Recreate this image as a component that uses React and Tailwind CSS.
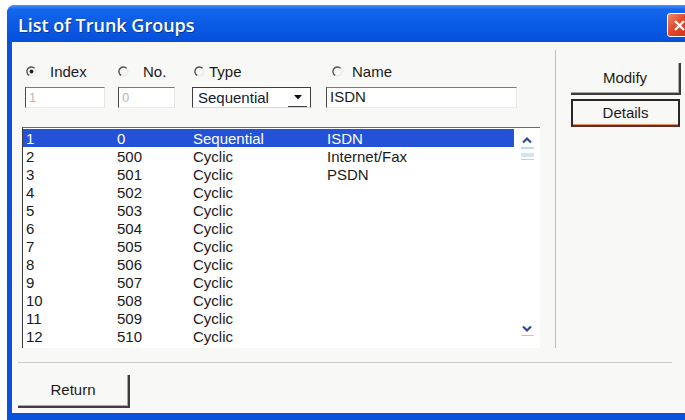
import React from "react";

const rows = [
  ["1", "0", "Sequential", "ISDN"],
  ["2", "500", "Cyclic", "Internet/Fax"],
  ["3", "501", "Cyclic", "PSDN"],
  ["4", "502", "Cyclic", ""],
  ["5", "503", "Cyclic", ""],
  ["6", "504", "Cyclic", ""],
  ["7", "505", "Cyclic", ""],
  ["8", "506", "Cyclic", ""],
  ["9", "507", "Cyclic", ""],
  ["10", "508", "Cyclic", ""],
  ["11", "509", "Cyclic", ""],
  ["12", "510", "Cyclic", ""],
];

function Radio({ checked }) {
  return (
    <svg width="11" height="11" viewBox="0 0 11 11" className="shrink-0">
      <circle cx="5.5" cy="5.5" r="4.5" fill="none" stroke="#e4e4e4" strokeWidth="1" />
      <path d="M8.6 2.3 A4.5 4.5 0 1 0 3.2 9.4" fill="none" stroke="#555" strokeWidth="1.4" />
      {checked && <circle cx="5.5" cy="5.5" r="1.9" fill="#222" />}
    </svg>
  );
}

function Field({ children, className = "" }) {
  return (
    <div
      className={`h-[21px] bg-white border-t border-l border-t-[#7a7a7a] border-l-[#4a4a4a] border-r border-b border-r-[#e6e6e6] border-b-[#ececec] flex items-center pl-[3px] ${className}`}
    >
      {children}
    </div>
  );
}

function Chevron({ up }) {
  return (
    <svg width="12" height="8" viewBox="0 0 12 8">
      <path
        d={up ? "M2 6.5 L6 2.5 L10 6.5" : "M2 1.5 L6 5.5 L10 1.5"}
        fill="none"
        stroke="#2a4a9e"
        strokeWidth="2.2"
      />
    </svg>
  );
}

export default function App() {
  return (
    <div
      className="w-[685px] h-[420px] bg-white overflow-hidden"
      style={{ fontFamily: '"Liberation Sans", Arial, sans-serif' }}
    >
      <div className="ml-[7px] mt-[5px] w-[700px] h-[415px] rounded-t-[8px] bg-[#0a52dc] flex flex-col overflow-hidden">
        {/* title bar */}
        <div className="h-[37px] shrink-0 flex items-center justify-between pl-[11px] pr-[15px] bg-[linear-gradient(to_bottom,#4a95f8_0%,#1466ec_12%,#0a5ae4_55%,#0650dc_100%)]">
          <span className="text-white font-semibold text-[18px] leading-none [text-shadow:1px_1px_0_#0a3a9a] pt-[2px] font-['Open_Sans',sans-serif]">
            List of Trunk Groups
          </span>
          <div className="w-[25px] h-[24px] mt-[3px] rounded-[3px] border border-white bg-[linear-gradient(135deg,#f08a6a_0%,#e2472a_45%,#c8301a_100%)] flex items-center justify-center">
            <svg width="13" height="13" viewBox="0 0 13 13">
              <path d="M2 2 L11 11 M11 2 L2 11" stroke="white" strokeWidth="2.4" />
            </svg>
          </div>
        </div>

        {/* dialog body */}
        <div className="flex-1 ml-[5px] mb-[7px] bg-[#f8f8f6] flex flex-col text-[15px] text-[#1a1a1a]">
          <div className="h-[306px] flex">
            {/* search + list */}
            <div className="w-[543px] pl-[10px] pt-[21px] flex flex-col">
              <div className="ml-[3px] grid grid-cols-[93px_74px_134px_191px]">
                <div className="h-[17px] flex items-center">
                  <span className="ml-[1px]"><Radio checked /></span>
                  <span className="ml-[13px] leading-none">Index</span>
                </div>
                <div className="h-[17px] flex items-center">
                  <Radio />
                  <span className="ml-[14px] leading-none">No.</span>
                </div>
                <div className="h-[17px] flex items-center">
                  <span className="ml-[2px]"><Radio /></span>
                  <span className="ml-[4px] leading-none">Type</span>
                </div>
                <div className="h-[17px] flex items-center">
                  <span className="ml-[6px]"><Radio /></span>
                  <span className="ml-[9px] leading-none">Name</span>
                </div>

                <Field className="mt-[7px] w-[80px] text-[#b8b8b8] text-[13px]">1</Field>
                <Field className="mt-[7px] w-[57px] text-[#b8b8b8] text-[13px]">0</Field>
                <div className="mt-[7px] w-[119px] h-[21px] bg-white border border-[#3e3e3e] border-b-[#d8d8d8] flex items-center pl-[5px]">
                  <span className="flex-1 text-[#111a33] leading-none">Sequential</span>
                  <div className="w-[19px] h-[19px] mr-[3px] border-b border-b-[#404040] flex items-center justify-center">
                    <svg width="8" height="5" viewBox="0 0 8 5">
                      <path d="M0 0 L8 0 L4 4.5 Z" fill="#111" />
                    </svg>
                  </div>
                </div>
                <Field className="mt-[7px] w-[191px] text-[#1a1a1a]">ISDN</Field>
              </div>

              {/* trunk group list */}
              <div className="mt-[19px] h-[221px] w-[518px] bg-white border-t border-t-[#b0503c] border-l border-l-[#3c3c3c] flex">
                <div className="flex-1 pt-[1px]">
                  {rows.map((r, i) => (
                    <div
                      key={r[0]}
                      className={`h-[18px] grid grid-cols-[91px_76px_134px_1fr] pl-[3px] items-center leading-none ${
                        i === 0 ? "bg-[#2452d6] text-white" : "text-[#1a1a1a]"
                      }`}
                    >
                      <span>{r[0]}</span>
                      <span>{r[1]}</span>
                      <span>{r[2]}</span>
                      <span>{r[3]}</span>
                    </div>
                  ))}
                </div>
                <div className="w-[26px] flex flex-col items-center pt-[8px] pb-[12px]">
                  <Chevron up />
                  <div className="mt-[3px] w-[13px] h-[2px] bg-[#b8dcef]" />
                  <div className="mt-[4px] w-[13px] h-[4px] bg-[#cfe6f4]" />
                  <div className="mt-[2px] w-[13px] h-[1px] bg-[#b8d4e6]" />
                  <div className="flex-1" />
                  <Chevron />
                  <div className="mt-[2px] w-[13px] h-[1px] bg-[#b0c8dc]" />
                </div>
              </div>
            </div>

            {/* vertical divider */}
            <div className="mt-[8px] w-[1px] h-[298px] bg-[#bdbdbd]" />

            {/* command buttons */}
            <div className="pl-[15px] pt-[21px] flex flex-col">
              <div className="w-[110px] h-[32px] border-r-2 border-b-2 border-r-[#3c3c3c] border-b-[#3c3c3c] shadow-[inset_-1px_-1px_0_#a8a8a8] flex items-center justify-center">
                Modify
              </div>
              <div className="mt-[4px] w-[109px] h-[28px] border-2 border-[#2c2626] border-b-[#5a3028] shadow-[inset_0_-1px_0_#e0906a] flex items-center justify-center">
                Details
              </div>
            </div>
          </div>

          {/* horizontal divider */}
          <div className="mt-[14px] ml-[6px] w-[654px] h-[1px] bg-[#cacaca]" />

          <div className="mt-[12px] ml-[6px] w-[112px] h-[33px] border-r-2 border-b-2 border-r-[#3c3c3c] border-b-[#4a3a44] shadow-[inset_-1px_-1px_0_#a8a8a8] flex items-center justify-center">
            Return
          </div>
        </div>
      </div>
    </div>
  );
}
